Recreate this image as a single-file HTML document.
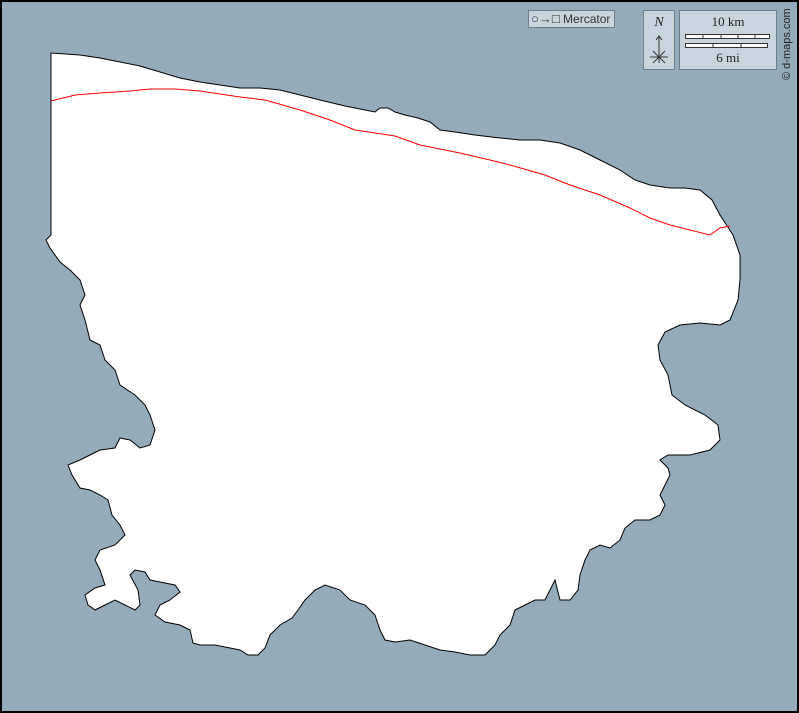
<!DOCTYPE html>
<html><head><meta charset="utf-8"><style>
html,body{margin:0;padding:0;background:#94abbb;}
body{width:799px;height:713px;overflow:hidden;position:relative;font-family:"Liberation Sans",sans-serif;}
.frame{position:absolute;left:0;top:0;width:795px;height:709px;border:2px solid #000;}
.box{position:absolute;background:#c9d5dd;border:1px solid #6d7f8a;}
</style></head><body>
<svg width="799" height="713" style="position:absolute;left:0;top:0">
<path fill="#fff" stroke="#000" stroke-width="1" d="M51,53 L51,235 L46,240 L50,248 L60,262 L70,270 L80,280 L85,295 L80,305 L85,320 L90,340 L100,345 L105,360 L115,370 L120,385 L135,395 L145,405 L150,415 L155,430 L150,445 L140,448 L130,440 L120,438 L115,448 L100,450 L90,455 L80,460 L68,465 L72,475 L80,488 L90,490 L100,495 L108,500 L112,515 L120,525 L125,535 L115,545 L100,550 L95,560 L100,570 L105,585 L95,588 L85,595 L88,605 L95,610 L105,605 L115,600 L125,605 L135,610 L140,605 L138,590 L130,575 L135,570 L145,572 L150,580 L160,582 L175,585 L180,592 L170,600 L160,605 L155,615 L165,622 L180,625 L190,630 L193,643 L200,645 L215,645 L230,648 L240,650 L248,655 L258,655 L265,648 L270,635 L280,625 L292,618 L298,610 L305,600 L315,590 L325,585 L340,590 L350,600 L365,605 L375,615 L380,630 L385,640 L395,642 L410,640 L425,645 L440,650 L455,652 L470,655 L485,655 L495,645 L500,635 L510,625 L515,610 L525,605 L535,600 L545,600 L550,590 L555,580 L560,600 L570,600 L578,590 L580,575 L585,560 L590,550 L600,545 L610,548 L620,540 L625,528 L635,520 L650,520 L660,515 L665,505 L660,495 L665,485 L670,475 L668,468 L660,460 L668,455 L690,455 L710,450 L720,440 L718,425 L705,415 L685,405 L672,395 L668,375 L660,360 L658,345 L665,332 L680,325 L700,323 L720,325 L730,320 L738,300 L740,280 L740,255 L733,235 L720,215 L712,200 L700,190 L685,188 L670,188 L650,185 L635,180 L620,170 L600,160 L580,150 L560,143 L540,140 L520,140 L500,138 L475,135 L455,132 L440,130 L430,122 L418,118 L405,115 L395,112 L388,108 L380,108 L375,112 L365,110 L345,106 L320,100 L300,95 L280,90 L260,88 L240,88 L220,85 L200,82 L180,78 L160,72 L140,66 L120,62 L100,58 L80,55 Z"/>
<polyline fill="none" stroke="#f00" stroke-width="1" points="51,101 75,95 100,93 130,91 150,89 175,89 200,91 240,97 265,100 300,110 330,120 355,130 375,133 395,136 420,145 460,153 490,160 510,165 545,175 570,185 600,195 630,208 650,218 670,225 690,230 710,235 720,228 730,226"/>
</svg>
<div class="box" style="left:528px;top:10px;width:85px;height:16px;font-size:12px;line-height:16px;color:#333;white-space:nowrap;overflow:hidden;">
 <span style="padding-left:2px;font-size:13px">○→□</span> Mercator</div>
<div class="box" style="left:643px;top:10px;width:30px;height:58px;">
 <div style="text-align:center;font-family:'Liberation Serif',serif;font-style:italic;font-size:14px;margin-top:4px;color:#222">N</div>
 <svg width="30" height="38" style="position:absolute;left:0;top:20px"><path d="M15,5 L15,32 M12,9 L15,5 L18,9 M9,20 L21,32 M21,20 L9,32 M6,26 L24,26" stroke="#333" stroke-width="1" fill="none"/></svg>
</div>
<div class="box" style="left:679px;top:10px;width:96px;height:58px;font-family:'Liberation Serif',serif;font-size:13px;color:#222;text-align:center;">
 <div style="margin-top:3px">10 km</div>
 <svg width="96" height="18" style="position:absolute;left:0;top:21px">
 <rect x="5.5" y="2.5" width="84" height="4" fill="#fff" stroke="#333"/>
 <path d="M23,2 L23,7 M41,2 L41,7 M58,2 L58,7 M75,2 L75,7" stroke="#333"/>
 <rect x="5.5" y="11.5" width="82" height="4" fill="#fff" stroke="#333"/>
 <path d="M33,11 L33,16 M61,11 L61,16" stroke="#333"/>
 </svg>
 <div style="position:absolute;left:0;right:0;top:39px">6 mi</div>
</div>
<div style="position:absolute;left:781px;top:80px;transform:rotate(-90deg);transform-origin:0 0;font-size:11px;color:#222;white-space:nowrap;width:80px;">© d-maps.com</div>
<div class="frame"></div>
</body></html>
